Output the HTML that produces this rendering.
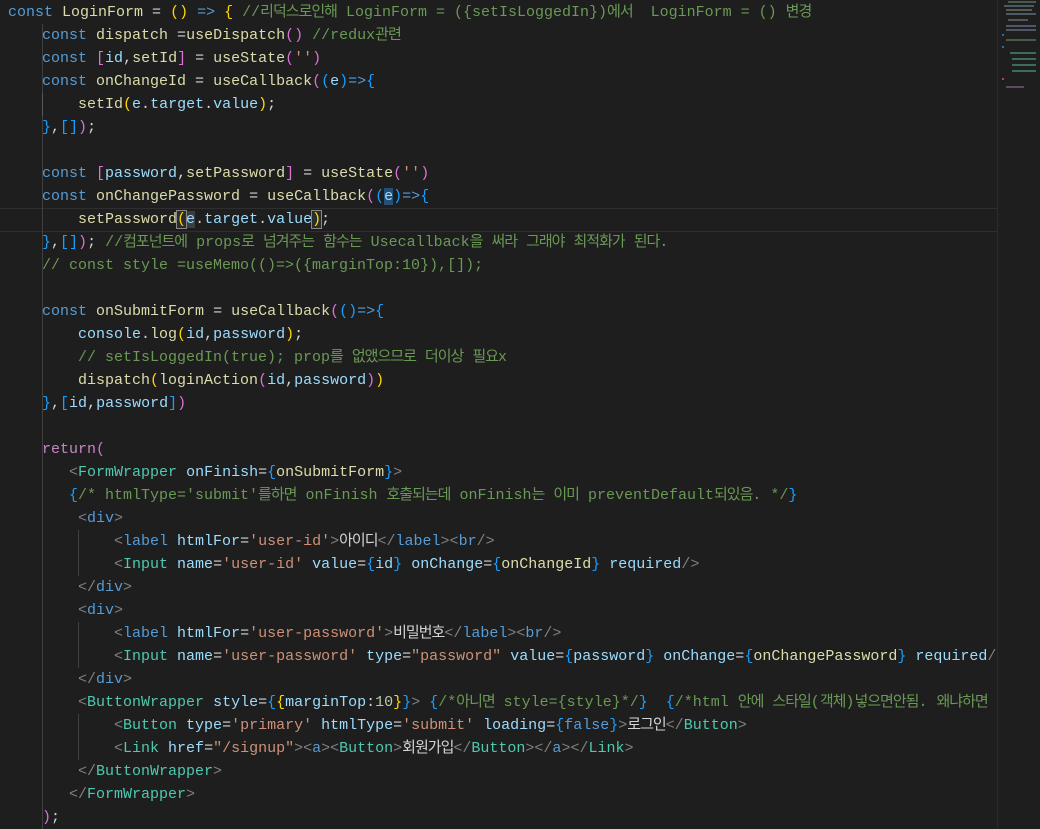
<!DOCTYPE html>
<html><head><meta charset="utf-8"><style>
html,body{margin:0;padding:0;background:#1e1e1e;width:1040px;height:829px;overflow:hidden}
#ed{position:absolute;left:0;top:0;width:997px;height:829px;overflow:hidden;background:#1e1e1e}
#mm{position:absolute;left:997px;top:0;width:43px;height:829px;background:#1e1e1e;border-left:1px solid #2b2b2b}
.l{position:absolute;white-space:pre;font-family:"Liberation Mono","Noto Sans CJK KR",monospace;font-size:15px;line-height:23px;height:23px;color:#d4d4d4}
i{font-style:normal;font-family:"Noto Sans CJK KR","NanumGothic",sans-serif;letter-spacing:-1px;word-spacing:6.5px;line-height:1}
.k{color:#569cd6}.f{color:#dcdcaa}.v{color:#9cdcfe}.c{color:#6a9955}.s{color:#ce9178}
.y{color:#ffd700}.p{color:#da70d6}.b{color:#179fff}.t{color:#4ec9b0}.g{color:#808080}.n{color:#b5cea8}.r{color:#c586c0}
.gd{position:absolute;width:1px;background:#404040}
.hl{background:#264f78}
.bx{outline:1px solid #888;background:#2a2d2e}
</style></head><body>
<div id="ed">
<div style="position:absolute;left:0;top:208px;width:997px;height:22px;border-top:1px solid #2e2e2e;border-bottom:1px solid #2e2e2e"></div>
<div class="gd" style="left:42px;top:24px;height:805px"></div>
<div class="gd" style="left:42px;top:93px;height:23px;background:#585858"></div>
<div class="gd" style="left:78px;top:530px;height:46px"></div>
<div class="gd" style="left:78px;top:622px;height:46px"></div>
<div class="gd" style="left:78px;top:714px;height:46px"></div>

<div class="l" style="left:8px;top:1px"><span class="k">const</span> <span class="f">LoginForm</span> = <span class="y">()</span> <span class="k">=&gt;</span> <span class="y">{</span> <span class="c">//<i>리덕스로인해</i> LoginForm = ({setIsLoggedIn})<i>에서</i>  LoginForm = () <i>변경</i></span></div>
<div class="l" style="left:42px;top:24px"><span class="k">const</span> <span class="f">dispatch</span> =<span class="f">useDispatch</span><span class="p">()</span> <span class="c">//redux<i>관련</i></span></div>
<div class="l" style="left:42px;top:47px"><span class="k">const</span> <span class="p">[</span><span class="v">id</span>,<span class="f">setId</span><span class="p">]</span> = <span class="f">useState</span><span class="p">(</span><span class="s">''</span><span class="p">)</span></div>
<div class="l" style="left:42px;top:70px"><span class="k">const</span> <span class="f">onChangeId</span> = <span class="f">useCallback</span><span class="p">(</span><span class="b">(</span><span class="v">e</span><span class="b">)</span><span class="k">=&gt;</span><span class="b">{</span></div>
<div class="l" style="left:78px;top:93px"><span class="f">setId</span><span class="y">(</span><span class="v">e</span>.<span class="v">target</span>.<span class="v">value</span><span class="y">)</span>;</div>
<div class="l" style="left:42px;top:116px"><span class="b">}</span>,<span class="b">[]</span><span class="p">)</span>;</div>

<div class="l" style="left:42px;top:162px"><span class="k">const</span> <span class="p">[</span><span class="v">password</span>,<span class="f">setPassword</span><span class="p">]</span> = <span class="f">useState</span><span class="p">(</span><span class="s">''</span><span class="p">)</span></div>
<div class="l" style="left:42px;top:185px"><span class="k">const</span> <span class="f">onChangePassword</span> = <span class="f">useCallback</span><span class="p">(</span><span class="b">(</span><span class="v hl">e</span><span class="b">)</span><span class="k">=&gt;</span><span class="b">{</span></div>
<div class="l" style="left:78px;top:208px"><span class="f">setPassword</span><span class="y bx">(</span><span class="v" style="background:#3a3d41">e</span>.<span class="v">target</span>.<span class="v">value</span><span class="y bx">)</span>;</div>
<div class="l" style="left:42px;top:231px"><span class="b">}</span>,<span class="b">[]</span><span class="p">)</span>; <span class="c">//<i>컴포넌트에</i> props<i>로</i> <i>넘겨주는</i> <i>함수는</i> Usecallback<i>을</i> <i>써라</i> <i>그래야</i> <i>최적화가</i> <i>된다</i>.</span></div>
<div class="l" style="left:42px;top:254px"><span class="c">// const style =useMemo(()=&gt;({marginTop:10}),[]);</span></div>

<div class="l" style="left:42px;top:300px"><span class="k">const</span> <span class="f">onSubmitForm</span> = <span class="f">useCallback</span><span class="p">(</span><span class="b">()</span><span class="k">=&gt;</span><span class="b">{</span></div>
<div class="l" style="left:78px;top:323px"><span class="v">console</span>.<span class="f">log</span><span class="y">(</span><span class="v">id</span>,<span class="v">password</span><span class="y">)</span>;</div>
<div class="l" style="left:78px;top:346px"><span class="c">// setIsLoggedIn(true); prop<i>를</i> <i>없앴으므로</i> <i>더이상</i> <i>필요</i>x</span></div>
<div class="l" style="left:78px;top:369px"><span class="f">dispatch</span><span class="y">(</span><span class="f">loginAction</span><span class="p">(</span><span class="v">id</span>,<span class="v">password</span><span class="p">)</span><span class="y">)</span></div>
<div class="l" style="left:42px;top:392px"><span class="b">}</span>,<span class="b">[</span><span class="v">id</span>,<span class="v">password</span><span class="b">]</span><span class="p">)</span></div>

<div class="l" style="left:42px;top:438px"><span class="r">return</span><span class="p">(</span></div>
<div class="l" style="left:69px;top:461px"><span class="g">&lt;</span><span class="t">FormWrapper</span> <span class="v">onFinish</span>=<span class="b">{</span><span class="f">onSubmitForm</span><span class="b">}</span><span class="g">&gt;</span></div>
<div class="l" style="left:69px;top:484px"><span class="b">{</span><span class="c">/* htmlType='submit'<i>를하면</i> onFinish <i>호출되는데</i> onFinish<i>는</i> <i>이미</i> preventDefault<i>되있음</i>. */</span><span class="b">}</span></div>
<div class="l" style="left:78px;top:507px"><span class="g">&lt;</span><span class="k">div</span><span class="g">&gt;</span></div>
<div class="l" style="left:114px;top:530px"><span class="g">&lt;</span><span class="k">label</span> <span class="v">htmlFor</span>=<span class="s">'user-id'</span><span class="g">&gt;</span><i>아이디</i><span class="g">&lt;/</span><span class="k">label</span><span class="g">&gt;&lt;</span><span class="k">br</span><span class="g">/&gt;</span></div>
<div class="l" style="left:114px;top:553px"><span class="g">&lt;</span><span class="t">Input</span> <span class="v">name</span>=<span class="s">'user-id'</span> <span class="v">value</span>=<span class="b">{</span><span class="v">id</span><span class="b">}</span> <span class="v">onChange</span>=<span class="b">{</span><span class="f">onChangeId</span><span class="b">}</span> <span class="v">required</span><span class="g">/&gt;</span></div>
<div class="l" style="left:78px;top:576px"><span class="g">&lt;/</span><span class="k">div</span><span class="g">&gt;</span></div>
<div class="l" style="left:78px;top:599px"><span class="g">&lt;</span><span class="k">div</span><span class="g">&gt;</span></div>
<div class="l" style="left:114px;top:622px"><span class="g">&lt;</span><span class="k">label</span> <span class="v">htmlFor</span>=<span class="s">'user-password'</span><span class="g">&gt;</span><i>비밀번호</i><span class="g">&lt;/</span><span class="k">label</span><span class="g">&gt;&lt;</span><span class="k">br</span><span class="g">/&gt;</span></div>
<div class="l" style="left:114px;top:645px"><span class="g">&lt;</span><span class="t">Input</span> <span class="v">name</span>=<span class="s">'user-password'</span> <span class="v">type</span>=<span class="s">"password"</span> <span class="v">value</span>=<span class="b">{</span><span class="v">password</span><span class="b">}</span> <span class="v">onChange</span>=<span class="b">{</span><span class="f">onChangePassword</span><span class="b">}</span> <span class="v">required</span><span class="g">/&gt;</span></div>
<div class="l" style="left:78px;top:668px"><span class="g">&lt;/</span><span class="k">div</span><span class="g">&gt;</span></div>
<div class="l" style="left:78px;top:691px"><span class="g">&lt;</span><span class="t">ButtonWrapper</span> <span class="v">style</span>=<span class="b">{</span><span class="y">{</span><span class="v">marginTop</span>:<span class="n">10</span><span class="y">}</span><span class="b">}</span><span class="g">&gt;</span> <span class="b">{</span><span class="c">/*<i>아니면</i> style={style}*/</span><span class="b">}</span>  <span class="b">{</span><span class="c">/*html <i>안에</i> <i>스타일</i>(<i>객체</i>)<i>넣으면안됨</i>. <i>왜냐하면</i></span></div>
<div class="l" style="left:114px;top:714px"><span class="g">&lt;</span><span class="t">Button</span> <span class="v">type</span>=<span class="s">'primary'</span> <span class="v">htmlType</span>=<span class="s">'submit'</span> <span class="v">loading</span>=<span class="b">{</span><span class="k">false</span><span class="b">}</span><span class="g">&gt;</span><i>로그인</i><span class="g">&lt;/</span><span class="t">Button</span><span class="g">&gt;</span></div>
<div class="l" style="left:114px;top:737px"><span class="g">&lt;</span><span class="t">Link</span> <span class="v">href</span>=<span class="s">"/signup"</span><span class="g">&gt;&lt;</span><span class="k">a</span><span class="g">&gt;&lt;</span><span class="t">Button</span><span class="g">&gt;</span><i>회원가입</i><span class="g">&lt;/</span><span class="t">Button</span><span class="g">&gt;&lt;/</span><span class="k">a</span><span class="g">&gt;&lt;/</span><span class="t">Link</span><span class="g">&gt;</span></div>
<div class="l" style="left:78px;top:760px"><span class="g">&lt;/</span><span class="t">ButtonWrapper</span><span class="g">&gt;</span></div>
<div class="l" style="left:69px;top:783px"><span class="g">&lt;/</span><span class="t">FormWrapper</span><span class="g">&gt;</span></div>
<div class="l" style="left:42px;top:806px"><span class="p">)</span>;</div>
</div>
<div id="mm">
<div style="position:absolute;left:10px;top:1px;width:28px;height:2px;background:#4a5a4a"></div>
<div style="position:absolute;left:6px;top:5px;width:30px;height:2px;background:#4a5a6a"></div>
<div style="position:absolute;left:8px;top:9px;width:26px;height:2px;background:#5a5a4a"></div>
<div style="position:absolute;left:8px;top:13px;width:30px;height:2px;background:#4a5a6a"></div>
<div style="position:absolute;left:10px;top:19px;width:20px;height:2px;background:#555"></div>
<div style="position:absolute;left:8px;top:25px;width:30px;height:2px;background:#4a5a6a"></div>
<div style="position:absolute;left:8px;top:29px;width:30px;height:2px;background:#556"></div>
<div style="position:absolute;left:4px;top:34px;width:2px;height:2px;background:#1f6fa8"></div>
<div style="position:absolute;left:8px;top:39px;width:30px;height:2px;background:#4a5a4a"></div>
<div style="position:absolute;left:4px;top:46px;width:2px;height:2px;background:#1f6fa8"></div>
<div style="position:absolute;left:12px;top:52px;width:26px;height:2px;background:#3f6a60"></div>
<div style="position:absolute;left:14px;top:58px;width:24px;height:2px;background:#3f6a60"></div>
<div style="position:absolute;left:14px;top:64px;width:24px;height:2px;background:#3f6a60"></div>
<div style="position:absolute;left:14px;top:70px;width:24px;height:2px;background:#3f6a60"></div>
<div style="position:absolute;left:4px;top:78px;width:2px;height:2px;background:#c04040"></div>
<div style="position:absolute;left:8px;top:86px;width:18px;height:2px;background:#5a4a6a"></div>
</div>
</body></html>
